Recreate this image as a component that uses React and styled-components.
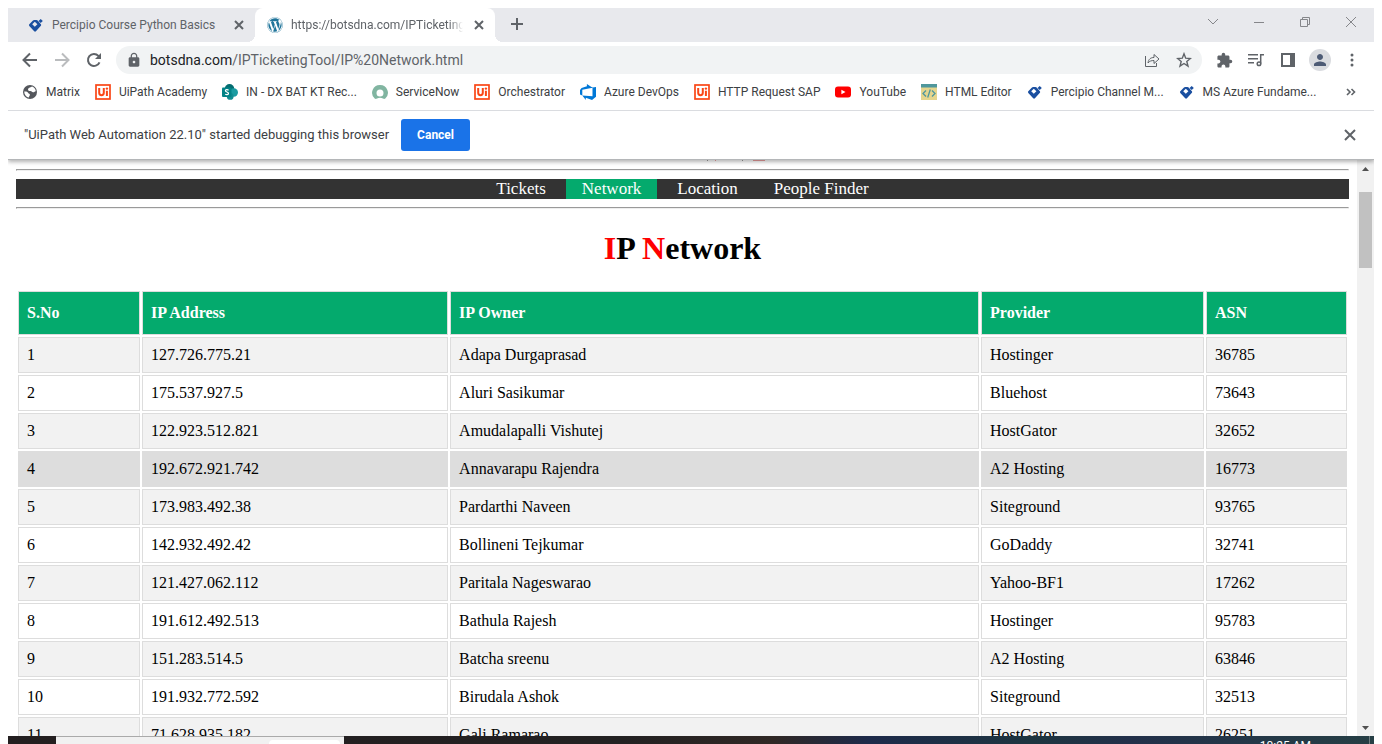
import React from "react";
import styled, { createGlobalStyle } from "styled-components";
import { MdExtension, MdPerson, MdLock } from "react-icons/md";
import { FaWordpress } from "react-icons/fa";

const Global = createGlobalStyle`
  * { box-sizing: border-box; }
  body { margin: 0; background: #fff; }
  button, input { font: inherit; color: inherit; padding: 0; margin: 0; border: 0; background: none; }
`;

const Window = styled.div`
  height: 100vh;
  padding: 8px 8px 0;
  display: flex;
  flex-direction: column;
  overflow: hidden;
  font: 12px/16px Roboto, "Open Sans", sans-serif;
  color: #3c4043;
`;

const IconButton = styled.button`
  display: grid;
  place-items: center;
  flex: none;
  width: ${(p) => p.$size || 16}px;
  height: ${(p) => p.$size || 16}px;
  color: ${(p) => p.$color || "#5f6368"};
  border-radius: 50%;
  svg { display: block; }
`;
const Avatar = styled(IconButton)`
  margin: 0 -3px;
  background: #dadce0;
`;

/* Tab strip */
const TabStrip = styled.header`
  display: flex;
  flex: none;
  height: 34px;
  background: #e8e9ed;
`;
const Tab = styled.div`
  position: relative;
  display: flex;
  align-items: center;
  gap: 8px;
  width: ${(p) => (p.$active ? 240 : 247)}px;
  padding: 0 8px 0 ${(p) => (p.$active ? 12 : 20)}px;
  background: ${(p) => (p.$active ? "#fff" : "transparent")};
  border-radius: 8px 8px 0 0;
  color: #5f6368;
  &::before, &::after {
    content: "";
    display: ${(p) => (p.$active ? "block" : "none")};
    position: absolute;
    bottom: 0;
    width: 8px;
    height: 8px;
  }
  &::before { left: -8px; background: radial-gradient(circle at 0 0, transparent 8px, #fff 8px); }
  &::after { right: -8px; background: radial-gradient(circle at 100% 0, transparent 8px, #fff 8px); }
`;
const TabTitle = styled.span`
  flex: 1;
  min-width: 0;
  overflow: hidden;
  white-space: nowrap;
  mask-image: ${(p) => (p.$fade ? "linear-gradient(90deg, #000 92%, transparent)" : "none")};
`;
const NewTab = styled(IconButton)`
  margin: 8px 0 0 14px;
`;
const WindowControls = styled.div`
  display: flex;
  gap: 30px;
  margin: 6px 15px 0 auto;
`;

/* Toolbar */
const Toolbar = styled.div`
  display: flex;
  flex: none;
  align-items: center;
  gap: 16px;
  height: 36px;
  padding: 0 14px;
`;
const Omnibox = styled.div`
  display: flex;
  flex: 1;
  align-items: center;
  gap: 16px;
  height: 28px;
  margin: 0 -2px;
  padding: 0 10px;
  border-radius: 14px;
  background: #f1f3f4;
`;
const Url = styled.div`
  flex: 1;
  margin-left: -8px;
  font-size: 14px;
  color: #5f6368;
  b { font-weight: 400; color: #202124; }
`;

/* Bookmarks */
const Bookmarks = styled.nav`
  display: flex;
  flex: none;
  align-items: center;
  gap: 15px;
  height: 33px;
  padding: 0 14px 5px;
  border-bottom: 1px solid #dadce0;
`;
const Bookmark = styled.a`
  display: flex;
  align-items: center;
  gap: 8px;
  color: #3c4043;
  text-decoration: none;
  white-space: nowrap;
  svg { display: block; flex: none; }
`;
const EndButton = styled(IconButton)`
  margin-left: auto;
`;

/* Debugging notice */
const InfoBar = styled.div`
  position: relative;
  z-index: 1;
  display: flex;
  flex: none;
  align-items: center;
  gap: 12px;
  height: 49px;
  padding: 0 16px;
  background: #fff;
  border-bottom: 1px solid #b4b6b8;
  box-shadow: 0 2px 4px rgba(0, 0, 0, 0.3);
  clip-path: inset(0 0 -8px);
  font-size: 13px;
`;
const Cancel = styled.button`
  height: 32px;
  padding: 0 16px;
  border-radius: 3px;
  background: #1a73e8;
  color: #fff;
  font-size: 12px;
  font-weight: 700;
`;

/* Web page */
const Viewport = styled.div`
  display: flex;
  flex: 1;
  min-height: 0;
`;
const Page = styled.main`
  flex: 1;
  min-width: 0;
  overflow: hidden;
  padding: 0 8px;
  font: 16px/18px "Liberation Serif", "Times New Roman", serif;
  color: #000;
`;
const ScrolledTitle = styled.svg`
  display: block;
  margin: 0 auto;
`;
const Rule = styled.hr`
  margin: 8px 0;
`;
const Menu = styled.ul`
  display: flex;
  justify-content: center;
  gap: 4px;
  margin: 0;
  padding: 0;
  list-style: none;
  background: #333;
`;
const MenuLink = styled.a`
  display: block;
  padding: 0 16px;
  font-size: 17px;
  line-height: 20px;
  color: #fff;
  text-decoration: none;
  background: ${(p) => (p.$active ? "#04aa6d" : "transparent")};
`;
const Title = styled.h1`
  margin: 21px 0 22px;
  font-size: 32px;
  line-height: 37px;
  text-align: center;
  span { color: #f00; }
`;
const Table = styled.table`
  width: 100%;
  table-layout: fixed;
  border-spacing: 2px;
`;
const Col = styled.col`
  width: ${(p) => p.$w}%;
`;
const HeadCell = styled.th`
  padding: 12px 8px;
  border: 1px solid #ddd;
  background: #04aa6d;
  color: #fff;
  text-align: left;
`;
const Row = styled.tr`
  background: ${(p) => (p.$hover ? "#ddd" : p.$odd ? "#f2f2f2" : "#fff")};
`;
const Cell = styled.td`
  padding: 8px;
  border: 1px solid #ddd;
`;

const ScrollBar = styled.div`
  display: flex;
  flex-direction: column;
  align-items: center;
  width: 17px;
  padding: 0 2px;
  background: #f1f1f1;
`;
const ScrollArrow = styled.button`
  display: grid;
  place-items: center;
  width: 13px;
  height: 17px;
`;
const Thumb = styled.div`
  width: 13px;
  height: 76px;
  margin: 15px 0 auto;
  background: #c1c1c1;
`;

/* Taskbar */
const Taskbar = styled.footer`
  display: flex;
  flex: none;
  height: 8px;
  overflow: hidden;
  padding-left: 48px;
  background: linear-gradient(90deg, #231f20 0, #232122 45%, #302825 56%, #1d2a4a 63%, #1e3540 75%, #22304a 82%, #263f45 100%);
`;
const SearchBox = styled.div`
  display: flex;
  justify-content: flex-end;
  width: 288px;
  padding: 3px 4px 0;
  border-top: 1px solid #aaa;
  background: #f1f1f1;
`;
const SearchPill = styled.div`
  width: 71px;
  height: 20px;
  border-radius: 4px;
  background: #fff;
`;
const Clock = styled.time`
  margin: 2px 58px 0 auto;
  color: #fff;
  line-height: 16px;
`;
const DesktopEdge = styled.div`
  width: 5px;
  border-left: 1px solid #6d7d80;
`;

const Percipio = () => (
  <svg width="16" height="16" viewBox="0 0 16 16">
    <path fill="#1a4fa0" fillRule="evenodd" d="M1.300 7.200 4.700 3.700q.6-.7 1.600-.7h2q1 0 1.600.7l3 3.500q.6.800 0 1.600l-5 5.500q-.8.900-1.700 0L1.300 8.900q-.7-.9 0-1.700ZM6.800 4.700 4.200 7.200l2.600 2.500 2.600-2.500Z" />
    <path fill="#1a4fa0" d="m12.700 2 2.100 2-2.100 2.100-2.100-2.100Z" />
  </svg>
);
const Globe = () => (
  <svg width="16" height="16" viewBox="0 0 16 16">
    <circle cx="8" cy="8" r="7" fill="#54575c" />
    <path fill="#fff" d="M2.200 7.500c1.800-.2 3.300.2 4 1.500.4 1 1.700.5 1.700 1.700 0 1.300-1 1.300-1 2.900-2.700-.5-4.700-2.900-4.700-6.100ZM8 3.400c.8 0 1.200-.8 2.200-.9 1.900.8 3.300 2.500 3.600 4.500-1 .5-1.600 1.500-2.800 1.300C9.800 8.200 9.600 7 8.400 7 7 7 6 6.800 6 5.500c0-1.200 1-2 2-2.100Z" />
  </svg>
);
const UiPath = () => (
  <svg width="16" height="16" viewBox="0 0 16 16">
    <rect x="1" y="1" width="14" height="14" fill="#fff" stroke="#fa4616" strokeWidth="1.700" />
    <path fill="none" stroke="#fa4616" strokeWidth="2" d="M4.200 4v4.800c0 3.200 4.600 3.200 4.600 0V4M11.900 6.700V12" />
    <circle cx="11.900" cy="4.600" r="1.200" fill="#fa4616" />
  </svg>
);
const SharePoint = () => (
  <svg width="16" height="16" viewBox="0 0 16 16">
    <circle cx="7.500" cy="4.800" r="4.800" fill="#036c70" />
    <circle cx="11.800" cy="8.500" r="4.200" fill="#1a9ba1" />
    <circle cx="8.200" cy="12.400" r="3.400" fill="#128c91" />
    <rect y="3.500" width="9.500" height="9.500" rx="1" fill="#038387" />
    <path d="M6.600 6.200C5.500 5.400 3.400 5.500 3.400 6.800c0 1.500 3.100 1 3.100 2.700 0 1.400-2.300 1.400-3.300.6" fill="none" stroke="#fff" strokeWidth="1.200" />
  </svg>
);
const ServiceNow = () => (
  <svg width="16" height="16" viewBox="0 0 16 16">
    <path fill="#81b5a1" fillRule="evenodd" d="M8 1a7.800 7.800 0 0 1 5.300 13.600c-.7.600-1.500.6-2.300 0-1.900-1.300-4.100-1.300-6 0-.8.6-1.600.6-2.300 0A7.800 7.800 0 0 1 8 1Zm0 4.500a3.500 3.500 0 1 0 0 7 3.500 3.500 0 0 0 0-7Z" />
  </svg>
);
const AzureDevOps = () => (
  <svg width="16" height="16" viewBox="0 0 16 16">
    <path fill="#0078d7" d="M16 3v9.700L12 16l-6.200-2.200V16L2.300 11.500l10.200.8V3.600ZM12.600 3.700 6.900 0v2.300L1.600 3.900 0 5.900v4.600l2.300 1V5.700Z" />
  </svg>
);
const YouTube = () => (
  <svg width="16" height="16" viewBox="0 0 16 16">
    <rect y="2.500" width="16" height="11" rx="3" fill="#f00" />
    <path d="m6.400 5.700 4.100 2.300-4.100 2.300Z" fill="#fff" />
  </svg>
);
const HtmlEditor = () => (
  <svg width="16" height="16" viewBox="0 0 16 16">
    <rect width="16" height="16" fill="#e5d58d" />
    <rect width="16" height="3.500" fill="#4f979c" />
    <path d="M5 6.500 2 9.500l3 3M11 6.500l3 3-3 3M9.300 5.500l-2.600 8" fill="none" stroke="#4f979c" strokeWidth="1.300" />
  </svg>
);

const Stroke = ({ d, size = 16, w = 2 }) => (
  <svg width={size} height={size} viewBox="0 0 16 16" fill="none" stroke="currentColor" strokeWidth={w}>
    <path d={d} />
  </svg>
);
const CLOSE = "m4 4 8 8M12 4l-8 8";

const bookmarks = [
  ["Matrix", Globe],
  ["UiPath Academy", UiPath],
  ["IN - DX BAT KT Rec...", SharePoint],
  ["ServiceNow", ServiceNow],
  ["Orchestrator", UiPath],
  ["Azure DevOps", AzureDevOps],
  ["HTTP Request SAP", UiPath],
  ["YouTube", YouTube],
  ["HTML Editor", HtmlEditor],
  ["Percipio Channel M...", Percipio],
  ["MS Azure Fundame...", Percipio],
];

const columns = [
  ["S.No", 9.24],
  ["IP Address", 23.17],
  ["IP Owner", 40.04],
  ["Provider", 16.88],
  ["ASN", 10.67],
];

const rows = [
  ["127.726.775.21", "Adapa Durgaprasad", "Hostinger", "36785"],
  ["175.537.927.5", "Aluri Sasikumar", "Bluehost", "73643"],
  ["122.923.512.821", "Amudalapalli Vishutej", "HostGator", "32652"],
  ["192.672.921.742", "Annavarapu Rajendra", "A2 Hosting", "16773"],
  ["173.983.492.38", "Pardarthi Naveen", "Siteground", "93765"],
  ["142.932.492.42", "Bollineni Tejkumar", "GoDaddy", "32741"],
  ["121.427.062.112", "Paritala Nageswarao", "Yahoo-BF1", "17262"],
  ["191.612.492.513", "Bathula Rajesh", "Hostinger", "95783"],
  ["151.283.514.5", "Batcha sreenu", "A2 Hosting", "63846"],
  ["191.932.772.592", "Birudala Ashok", "Siteground", "32513"],
  ["71.628.935.182", "Gali Ramarao", "HostGator", "26251"],
];

export default function App() {
  return (
    <Window>
      <Global />
      <TabStrip>
        <Tab>
          <Percipio />
          <TabTitle>Percipio Course Python Basics</TabTitle>
          <IconButton aria-label="Close tab"><Stroke d={CLOSE} /></IconButton>
        </Tab>
        <Tab $active>
          <FaWordpress size={16} color="#21759b" />
          <TabTitle $fade>https://botsdna.com/IPTicketingTool</TabTitle>
          <IconButton aria-label="Close tab"><Stroke d={CLOSE} /></IconButton>
        </Tab>
        <NewTab aria-label="New tab"><Stroke d="M8 2v12M2 8h12" /></NewTab>
        <WindowControls>
          <IconButton aria-label="Search tabs" $color="#85868a"><Stroke w={1} d="m3 5 5 5 5-5" /></IconButton>
          <IconButton aria-label="Minimize" $color="#85868a"><Stroke w={1} d="M3 8.500h10" /></IconButton>
          <IconButton aria-label="Restore" $color="#85868a"><Stroke w={1} d="M3.500 5.500h7v7h-7ZM5.500 5.500v-2h7v7h-2" /></IconButton>
          <IconButton aria-label="Close" $color="#85868a"><Stroke w={1} d="m3 3 10 10M13 3 3 13" /></IconButton>
        </WindowControls>
      </TabStrip>

      <Toolbar>
        <IconButton aria-label="Back"><Stroke d="M15 8H2M8 1.500 1.500 8 8 14.500" /></IconButton>
        <IconButton aria-label="Forward" $color="#babcbe"><Stroke d="M1 8h13M8 1.500 14.500 8 8 14.500" /></IconButton>
        <IconButton aria-label="Reload">
          <svg width="16" height="16" viewBox="0 0 16 16">
            <path d="M13.500 10.300A6 6 0 1 1 12.400 3.900L13.500 5" fill="none" stroke="currentColor" strokeWidth="2" />
            <path d="M15 1v6H9Z" fill="currentColor" />
          </svg>
        </IconButton>
        <Omnibox>
          <MdLock size={16} color="#5f6368" />
          <Url><b>botsdna.com</b>/IPTicketingTool/IP%20Network.html</Url>
          <IconButton aria-label="Share">
            <Stroke w={1} d="M1.500 4v10.500h11V11M4 11c.5-4 2.800-5.500 6-5.500v-3L15 7l-5 4.500v-3c-2.500 0-4.500.5-6 2.500Z" />
          </IconButton>
          <IconButton aria-label="Bookmark this tab">
            <Stroke w={1.4} d="m8 1.800 1.700 4.400 4.700.3-3.600 3 1.200 4.600L8 11.500l-4 2.600 1.200-4.600-3.600-3 4.700-.3Z" />
          </IconButton>
        </Omnibox>
        <IconButton aria-label="Extensions"><MdExtension size={17} /></IconButton>
        <IconButton aria-label="Media controls">
          <svg width="16" height="16" viewBox="0 0 16 16" fill="none" stroke="currentColor" strokeWidth="1.500">
            <path d="M0 2.700h10M0 6.700h10M0 10.700h6M12.700 11.500V2.700H16" />
            <circle cx="11" cy="11.700" r="1.800" />
          </svg>
        </IconButton>
        <IconButton aria-label="Side panel">
          <svg width="16" height="16" viewBox="0 0 16 16">
            <path fill="currentColor" fillRule="evenodd" d="M1 1h14v14H1ZM3 3v10h7V3Z" />
          </svg>
        </IconButton>
        <Avatar aria-label="Profile" $size={22} $color="#4d5b75"><MdPerson size={18} /></Avatar>
        <IconButton aria-label="Menu">
          <svg width="16" height="16" viewBox="0 0 16 16" fill="currentColor">
            <circle cx="8" cy="3" r="1.500" /><circle cx="8" cy="8" r="1.500" /><circle cx="8" cy="13" r="1.500" />
          </svg>
        </IconButton>
      </Toolbar>

      <Bookmarks aria-label="Bookmarks">
        {bookmarks.map(([name, Icon]) => (
          <Bookmark key={name} href="#"><Icon />{name}</Bookmark>
        ))}
        <EndButton aria-label="More bookmarks"><Stroke w={1.6} d="m3 5 3 3-3 3M7.500 5l3 3-3 3" /></EndButton>
      </Bookmarks>

      <InfoBar>
        <span>"UiPath Web Automation 22.10" started debugging this browser</span>
        <Cancel>Cancel</Cancel>
        <EndButton aria-label="Dismiss"><Stroke d="m3 3 10 10M13 3 3 13" /></EndButton>
      </InfoBar>

      <Viewport>
        <Page>
          <ScrolledTitle width="170" height="1" viewBox="0 0 170 1" aria-hidden="true">
            <path stroke="#9a9a9a" d="M109 .5h1M144 .5h1" />
            <path stroke="#eda0a0" d="M117 .5h1M155 .5h12" />
          </ScrolledTitle>
          <Rule />
          <Menu>
            <li><MenuLink href="#">Tickets</MenuLink></li>
            <li><MenuLink href="#" $active>Network</MenuLink></li>
            <li><MenuLink href="#">Location</MenuLink></li>
            <li><MenuLink href="#">People Finder</MenuLink></li>
          </Menu>
          <Rule />
          <Title><span>I</span>P <span>N</span>etwork</Title>
          <Table>
            <colgroup>{columns.map(([name, w]) => <Col key={name} $w={w} />)}</colgroup>
            <thead>
              <tr>{columns.map(([name]) => <HeadCell key={name} scope="col">{name}</HeadCell>)}</tr>
            </thead>
            <tbody>
              {rows.map((cells, i) => (
                <Row key={cells[0]} $odd={i % 2 === 0} $hover={i === 3}>
                  <Cell>{i + 1}</Cell>
                  {cells.map((text) => <Cell key={text}>{text}</Cell>)}
                </Row>
              ))}
            </tbody>
          </Table>
        </Page>
        <ScrollBar>
          <ScrollArrow aria-label="Scroll up">
            <svg width="7" height="4" viewBox="0 0 7 4"><path d="M0 4 3.500 0 7 4Z" fill="#505050" /></svg>
          </ScrollArrow>
          <Thumb />
          <ScrollArrow aria-label="Scroll down">
            <svg width="7" height="4" viewBox="0 0 7 4"><path d="M0 0h7L3.500 4Z" fill="#505050" /></svg>
          </ScrollArrow>
        </ScrollBar>
      </Viewport>

      <Taskbar>
        <SearchBox><SearchPill /></SearchBox>
        <Clock>10:25 AM</Clock>
        <DesktopEdge />
      </Taskbar>
    </Window>
  );
}
